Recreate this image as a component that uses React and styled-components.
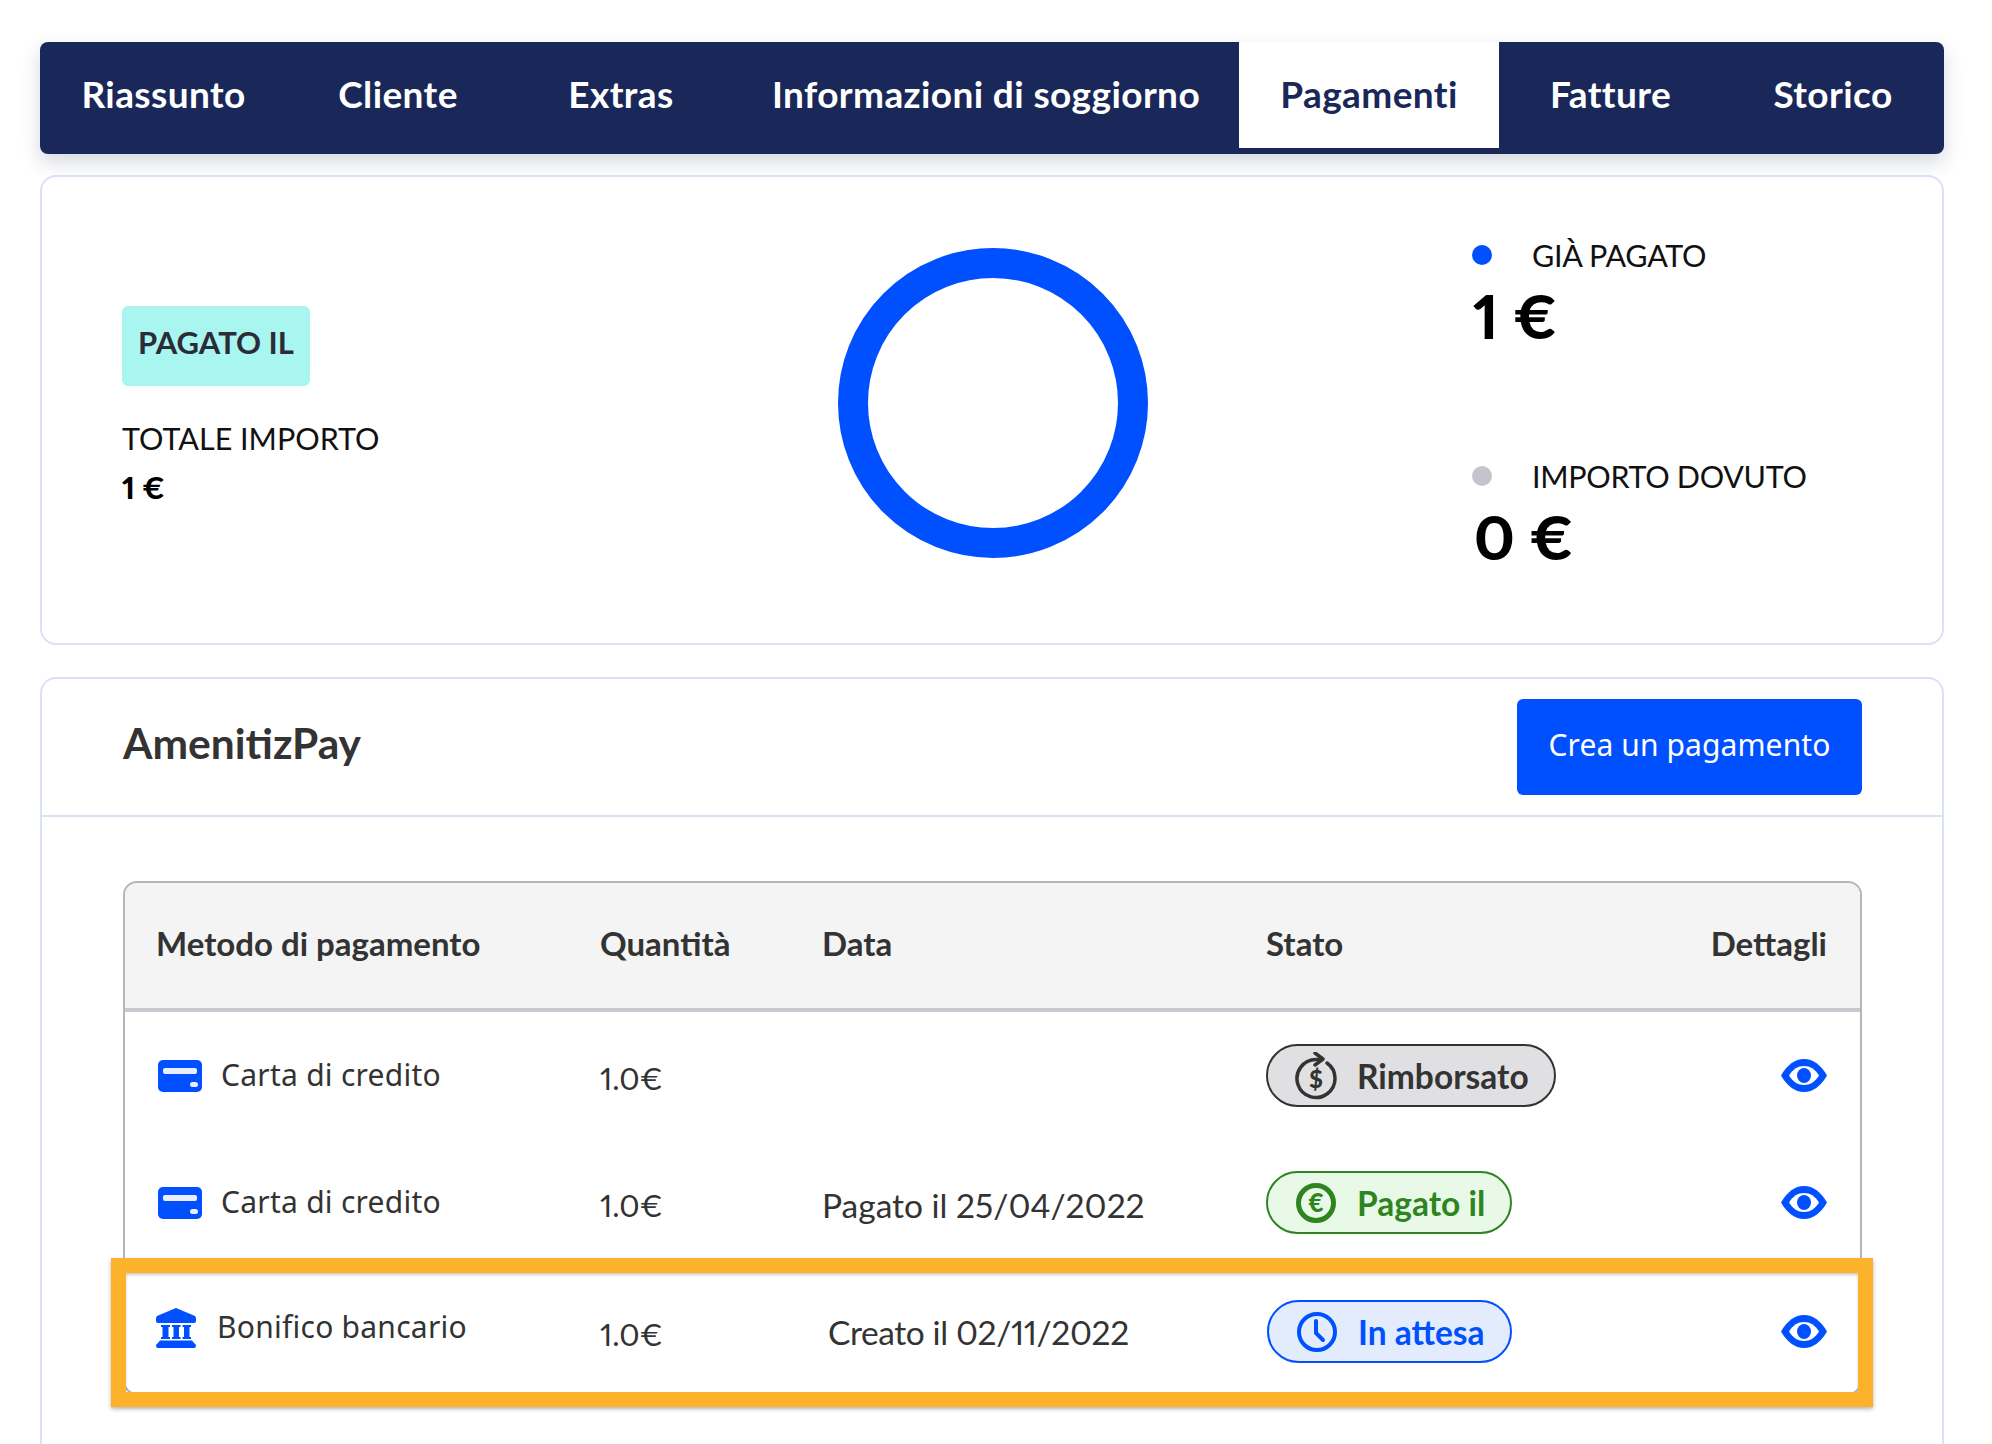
import React from 'react';
import styled, { createGlobalStyle } from 'styled-components';

const HEAD_FONT = '"Lato", "Liberation Sans", sans-serif';
const BODY_FONT = '"Noto Sans", "Liberation Sans", sans-serif';
const BLUE = '#0050ff';
const LINE = '#d9e1f6';

const GlobalStyle = createGlobalStyle`
  html, body {
    margin: 0;
    height: 1444px;
    overflow: hidden;
    background: #fff;
    font-family: ${BODY_FONT};
  }
`;

const tabs = [
  { label: 'Riassunto', width: 247 },
  { label: 'Cliente', width: 222 },
  { label: 'Extras', width: 224 },
  { label: 'Informazioni di soggiorno', width: 506 },
  { label: 'Pagamenti', width: 260, active: true },
  { label: 'Fatture', width: 223 },
  { label: 'Storico', width: 222 },
];

const CardIcon = () => (
  <svg width="44" height="32" viewBox="0 0 44 32">
    <rect width="44" height="32" rx="5" fill={BLUE} />
    <rect x="5" y="8" width="34" height="6" rx="2" fill="#e8eefc" />
    <rect x="32" y="22" width="8" height="5" rx="2.5" fill="#e8eefc" />
  </svg>
);

const BankIcon = () => (
  <svg width="40" height="40" viewBox="0 0 40 40" fill={BLUE}>
    <path d="M20 0 L39 8 Q40 9 40 11 V13 Q40 15 38 15 H2 Q0 15 0 13 V11 Q0 9 1 8 Z" />
    <path d="M5 17 H14 V19 H12.5 V29 H14 V31 H5 V29 H6.5 V19 H5 Z" />
    <path d="M16 17 H24.5 V19 H23 V29 H24.5 V31 H16 V29 H17.5 V19 H16 Z" />
    <path d="M26.5 17 H35 V19 H33.5 V29 H35 V31 H26.5 V29 H28 V19 H26.5 Z" />
    <path d="M4 32.5 H36 L38 35 Q40 36 40 38 Q40 40 38 40 H2 Q0 40 0 38 Q0 36 2 35 Z" />
  </svg>
);

const EyeIcon = () => (
  <svg width="46" height="33" viewBox="0 0 46 33">
    <path d="M0 16.5 C6 6 14 0 23 0 C32 0 40 6 46 16.5 C40 27 32 33 23 33 C14 33 6 27 0 16.5 Z" fill={BLUE} />
    <path d="M8 16.5 C12 10 17 7 23 7 C29 7 34 10 38 16.5 C34 23 29 26 23 26 C17 26 12 23 8 16.5 Z" fill="#fff" />
    <ellipse cx="23" cy="16.5" rx="7" ry="7.5" fill={BLUE} />
  </svg>
);

const RefundIcon = () => (
  <svg width="42" height="48" viewBox="0 0 42 48" fill="none" stroke="#333" strokeWidth="3.5" strokeLinecap="round" strokeLinejoin="round">
    <path d="M32 11 A19 19 0 1 1 21 7.5 H27" />
    <path d="M20 1 L28 7 L20 13" />
    <text x="21" y="36" textAnchor="middle" fontFamily={HEAD_FONT} fontSize="24" fontWeight="900" fill="#333" stroke="none">$</text>
  </svg>
);

const EuroIcon = () => (
  <svg width="42" height="40" viewBox="0 0 42 40" fill="none" stroke="#2e8520">
    <circle cx="21" cy="20" r="17.5" strokeWidth="5" />
    <text x="21" y="29" textAnchor="middle" fontFamily={HEAD_FONT} fontSize="26" fontWeight="900" fill="#2e8520" stroke="none">€</text>
  </svg>
);

const ClockIcon = () => (
  <svg width="42" height="40" viewBox="0 0 42 40" fill="none" stroke={BLUE} strokeWidth="4" strokeLinecap="round" strokeLinejoin="round">
    <circle cx="21" cy="20" r="18" />
    <path d="M20 9 V21 L27 28" />
  </svg>
);

const rows = [
  {
    icon: <CardIcon />, method: 'Carta di credito', amount: '1.0€', date: '',
    tone: 'gray', pillIcon: <RefundIcon />, status: 'Rimborsato',
  },
  {
    icon: <CardIcon />, method: 'Carta di credito', amount: '1.0€', date: 'Pagato il 25/04/2022',
    tone: 'green', pillIcon: <EuroIcon />, status: 'Pagato il',
  },
];

const App = () => (
  <Page>
    <GlobalStyle />
    <TabBar>
      {tabs.map(tab => (
        <Tab key={tab.label} $width={tab.width} $active={tab.active}>{tab.label}</Tab>
      ))}
    </TabBar>

    <SummaryCard>
      <TotalColumn>
        <PaidBadge>PAGATO IL</PaidBadge>
        <TotalLabel>TOTALE IMPORTO</TotalLabel>
        <TotalValue>1 €</TotalValue>
      </TotalColumn>
      <svg width="310" height="310" viewBox="0 0 310 310">
        <circle cx="155" cy="155" r="140" fill="none" stroke={BLUE} strokeWidth="30" />
      </svg>
      <LegendColumn>
        <LegendItem>
          <LegendHead>
            <Dot $color={BLUE} />
            <LegendLabel>GIÀ PAGATO</LegendLabel>
          </LegendHead>
          <LegendValue>1 €</LegendValue>
        </LegendItem>
        <LegendItem>
          <LegendHead>
            <Dot $color="#c4c4cc" />
            <LegendLabel>IMPORTO DOVUTO</LegendLabel>
          </LegendHead>
          <LegendValue $inset>0 €</LegendValue>
        </LegendItem>
      </LegendColumn>
    </SummaryCard>

    <PayCard>
      <PayHeader>
        <PayTitle>AmenitizPay</PayTitle>
        <CreateButton>Crea un pagamento</CreateButton>
      </PayHeader>
      <PayBody>
        <Table>
          <HeadRow>
            <HeadCell>Metodo di pagamento</HeadCell>
            <HeadCell>Quantità</HeadCell>
            <HeadCell>Data</HeadCell>
            <HeadCell>Stato</HeadCell>
            <HeadCell $right>Dettagli</HeadCell>
          </HeadRow>
          {rows.map((row, i) => (
            <Row key={i}>
              <MethodCell>
                {row.icon}
                <MethodText>{row.method}</MethodText>
              </MethodCell>
              <AmountCell>{row.amount}</AmountCell>
              <DateCell>{row.date}</DateCell>
              <div>
                <Pill $tone={row.tone}>
                  {row.pillIcon}
                  {row.status}
                </Pill>
              </div>
              <EyeCell><EyeIcon /></EyeCell>
            </Row>
          ))}
          <HighlightRow>
            <Frame />
            <MethodCell $tight>
              <BankIcon />
              <MethodText>Bonifico bancario</MethodText>
            </MethodCell>
            <AmountCell>1.0€</AmountCell>
            <DateCell $shift>Creato il 02/11/2022</DateCell>
            <div>
              <Pill $tone="blue" $shift>
                <ClockIcon />
                In attesa
              </Pill>
            </div>
            <EyeCell><EyeIcon /></EyeCell>
          </HighlightRow>
        </Table>
      </PayBody>
    </PayCard>
  </Page>
);

const Page = styled.div`
  box-sizing: border-box;
  width: 1992px;
  height: 1444px;
  padding: 42px 48px 0 40px;
  overflow: hidden;
`;

const TabBar = styled.nav`
  display: flex;
  height: 112px;
  border-radius: 8px;
  background: #1a2859;
  box-shadow: 0 8px 20px rgba(26, 40, 89, 0.18);
  overflow: hidden;
`;

const Tab = styled.div`
  box-sizing: border-box;
  width: ${p => p.$width}px;
  padding-top: 27px;
  text-align: center;
  font-family: ${HEAD_FONT};
  font-size: 37px;
  line-height: 50px;
  letter-spacing: 0.4px;
  font-weight: 700;
  color: ${p => (p.$active ? '#1a2859' : '#fff')};
  background: ${p => (p.$active ? '#fff' : 'transparent')};
  border-bottom: ${p => (p.$active ? '6px solid #1a2859' : 'none')};
`;

const SummaryCard = styled.section`
  box-sizing: border-box;
  display: grid;
  grid-template-columns: 716px 310px 1fr;
  align-items: start;
  height: 470px;
  margin-top: 21px;
  padding: 71px 0 0 80px;
  border: 2px solid ${LINE};
  border-radius: 16px;
`;

const TotalColumn = styled.div`
  display: flex;
  flex-direction: column;
  align-items: flex-start;
  padding-top: 58px;
`;

const PaidBadge = styled.div`
  box-sizing: border-box;
  width: 188px;
  height: 80px;
  padding-top: 15px;
  border-radius: 6px;
  background: #a9f5f0;
  text-align: center;
  font-family: ${HEAD_FONT};
  font-size: 31px;
  line-height: 42px;
  font-weight: 700;
  color: #2b2d36;
`;

const TotalLabel = styled.div`
  margin-top: 32px;
  font-family: ${HEAD_FONT};
  font-size: 30.5px;
  line-height: 40px;
  color: #111;
`;

const TotalValue = styled.div`
  margin-top: 9px;
  font-family: ${HEAD_FONT};
  font-size: 31px;
  line-height: 40px;
  font-weight: 900;
  font-variant-numeric: proportional-nums;
  color: #000;
`;

const LegendColumn = styled.div`
  display: flex;
  flex-direction: column;
  gap: 100px;
  margin-left: 324px;
  margin-top: -13px;
`;

const LegendItem = styled.div`
  display: flex;
  flex-direction: column;
`;

const LegendHead = styled.div`
  display: flex;
  align-items: center;
  gap: 40px;
  height: 40px;
`;

const Dot = styled.span`
  width: 20px;
  height: 20px;
  border-radius: 50%;
  background: ${p => p.$color};
`;

const LegendLabel = styled.span`
  font-family: ${HEAD_FONT};
  font-size: 30.5px;
  line-height: 40px;
  letter-spacing: -0.3px;
  color: #111;
`;

const LegendValue = styled.div`
  margin-top: 1px;
  margin-left: ${p => (p.$inset ? '2px' : '1px')};
  font-family: ${HEAD_FONT};
  font-size: 61px;
  line-height: 80px;
  font-weight: 900;
  font-variant-numeric: proportional-nums;
  color: #000;
`;

const PayCard = styled.section`
  box-sizing: border-box;
  height: 900px;
  margin-top: 32px;
  border: 2px solid ${LINE};
  border-radius: 16px;
`;

const PayHeader = styled.header`
  box-sizing: border-box;
  display: flex;
  align-items: center;
  justify-content: space-between;
  height: 138px;
  padding: 0 80px 0 81px;
  border-bottom: 2px solid ${LINE};
`;

const PayTitle = styled.h2`
  margin: -10px 0 0;
  font-family: ${HEAD_FONT};
  font-size: 42.5px;
  font-weight: 700;
  color: #333;
`;

const CreateButton = styled.button`
  width: 345px;
  height: 96px;
  border: none;
  border-radius: 6px;
  background: ${BLUE};
  color: #fff;
  font-family: ${BODY_FONT};
  font-size: 30px;
  letter-spacing: 0.1px;
  padding-bottom: 6px;
`;

const PayBody = styled.div`
  padding: 64px 80px 0 81px;
`;

const Table = styled.div`
  border: 2px solid #b5b5bb;
  border-radius: 14px;
`;

const columns = 'grid-template-columns: 444px 222px 444px 1fr auto;';

const HeadRow = styled.div`
  box-sizing: border-box;
  display: grid;
  ${columns}
  align-items: center;
  height: 129px;
  padding: 0 33px 6px 31px;
  background: #f4f4f4;
  border-bottom: 4px solid #c8c8ce;
  border-radius: 12px 12px 0 0;
`;

const HeadCell = styled.div`
  font-family: ${HEAD_FONT};
  font-size: 33px;
  font-weight: 700;
  color: #333;
  text-align: ${p => (p.$right ? 'right' : 'left')};
`;

const Row = styled.div`
  box-sizing: border-box;
  display: grid;
  ${columns}
  align-items: center;
  height: 127px;
  padding: 0 33px 0 31px;
`;

const HighlightRow = styled(Row)`
  position: relative;
  padding-top: 4px;
`;

const Frame = styled.div`
  position: absolute;
  top: -8px;
  left: -14px;
  right: -13px;
  bottom: -14px;
  border: 15px solid #fcb22b;
  box-shadow: 0 2px 4px rgba(0, 0, 0, 0.3), inset 0 2px 3px rgba(0, 0, 0, 0.2);
  pointer-events: none;
`;

const MethodCell = styled.div`
  display: flex;
  align-items: center;
  gap: ${p => (p.$tight ? '21px' : '19px')};
  margin-left: ${p => (p.$tight ? '0' : '2px')};
  margin-top: ${p => (p.$tight ? '-8px' : '0')};
`;

const MethodText = styled.span`
  font-family: ${BODY_FONT};
  font-size: 30px;
  line-height: 40px;
  letter-spacing: 0.25px;
  color: #333;
  position: relative;
  top: -1px;
`;

const AmountCell = styled.div`
  font-family: ${HEAD_FONT};
  font-size: 31px;
  line-height: 40px;
  font-variant-numeric: proportional-nums;
  color: #333;
  margin-top: 4px;
`;

const DateCell = styled.div`
  font-family: ${HEAD_FONT};
  font-size: 33.5px;
  line-height: 40px;
  font-variant-numeric: proportional-nums;
  letter-spacing: ${p => (p.$shift ? '-0.4px' : '0')};
  color: #333;
  margin-top: ${p => (p.$shift ? '0' : '4px')};
  margin-left: ${p => (p.$shift ? '6px' : '0')};
`;

const tones = {
  gray: { bg: '#e0e0e2', fg: '#333' },
  green: { bg: '#e9f9e8', fg: '#2e8520' },
  blue: { bg: '#e3ecfd', fg: BLUE },
};

const Pill = styled.div`
  box-sizing: border-box;
  display: inline-flex;
  align-items: center;
  gap: 20px;
  height: 63px;
  padding: 0 25px 0 27px;
  margin-left: ${p => (p.$shift ? '1px' : '0')};
  border: 2px solid ${p => tones[p.$tone].fg};
  border-radius: 32px;
  background: ${p => tones[p.$tone].bg};
  color: ${p => tones[p.$tone].fg};
  font-family: ${HEAD_FONT};
  font-size: 33.5px;
  font-weight: 700;
`;

const EyeCell = styled.div`
  display: flex;
  justify-content: flex-end;
`;

export default App;
